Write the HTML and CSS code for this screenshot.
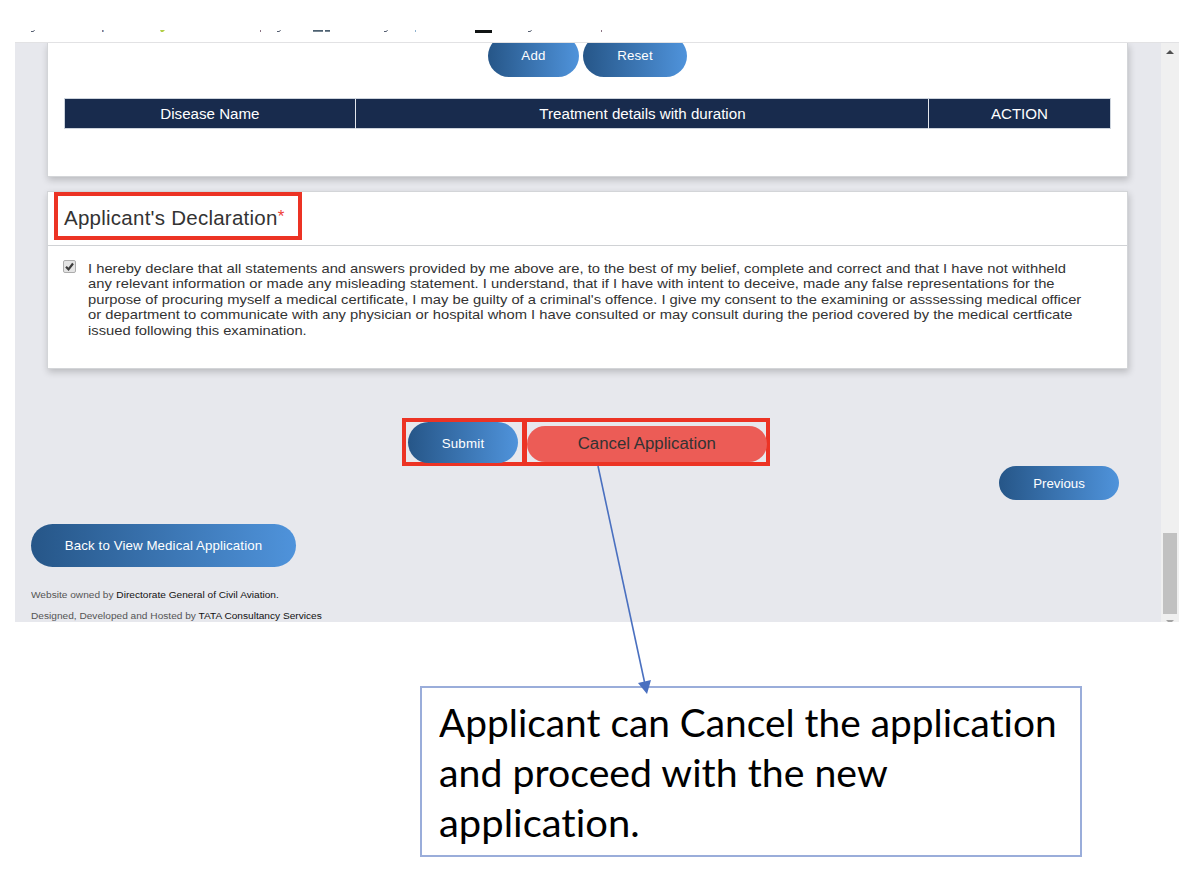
FILE: index.html
```html
<!DOCTYPE html>
<html lang="en">
<head>
<meta charset="utf-8">
<title>Medical Application</title>
<link rel="stylesheet" href="styles.css">
</head>
<body>
<main class="slide">
  <section class="browser">
    <svg class="bookmarks" width="1164" height="12" viewBox="15 30 1164 12">
      <g fill="none" stroke="#555e70" stroke-width="1">
        <path d="M31 31.500h2.500l1-1.500M277 31.500h2.500l1-1.500M384 31.500h2.500l1-1.500M528 31.500h2.500l1-1.500"/>
      </g>
      <path d="M102 30h1v2h-1zM260 30h1v2h-1zM601 30h1v2h-1z" fill="#8c7484"/>
      <path d="M103 30h1v2h-1zM415 30h1v2h-1z" fill="#8fb2cf"/>
      <path d="M160 30h5l-1 1-1 1h-2z" fill="#b2ce46"/>
      <path d="M313 30h10v1.700h-10zM325 30h5v1.700h-5z" fill="#4c6070"/>
      <path d="M475 30h17v3h-17z" fill="#101414"/>
    </svg>
    <div class="viewport">
      <div class="page">
        <section class="card history">
          <div class="history-actions">
            <button class="btn add">Add</button>
            <button class="btn reset">Reset</button>
          </div>
          <div class="table-head">
            <div><span>Disease Name</span></div><div><span>Treatment details with duration</span></div><div><span>ACTION</span></div>
          </div>
        </section>
        <section class="card declaration">
          <header class="declaration-head">
            <h2 class="marked">Applicant's Declaration<sup>*</sup></h2>
          </header>
          <div class="consent">
            <svg class="check" width="13" height="13" viewBox="0 0 13 13">
              <rect x=".5" y=".5" width="12" height="12" rx="1.500" fill="#e4e4e4" stroke="#adadad"/>
              <path d="M3 6.800l2.500 2.500L10 3.500" fill="none" stroke="#3c3c3c" stroke-width="2.200"/>
            </svg>
            <p class="consent-text">
              <span class="l1">I hereby declare that all statements and answers provided by me above are, to the best of my belief, complete and correct and that I have not withheld</span>
              <span class="l2">any relevant information or made any misleading statement. I understand, that if I have with intent to deceive, made any false representations for the</span>
              <span class="l3">purpose of procuring myself a medical certificate, I may be guilty of a criminal's offence. I give my consent to the examining or asssessing medical officer</span>
              <span class="l4">or department to communicate with any physician or hospital whom I have consulted or may consult during the period covered by the medical certficate</span>
              <span class="l5">issued following this examination.</span>
            </p>
          </div>
        </section>
        <div class="decision">
          <div class="frame frame-submit"><button class="btn submit">Submit</button></div>
          <div class="frame frame-cancel"><button class="btn cancel"><span>Cancel Application</span></button></div>
        </div>
        <div class="previous-row"><button class="btn previous">Previous</button></div>
        <button class="btn back">Back to View Medical Application</button>
        <footer class="footer">
          <p><span class="f1">Website owned by <b>Directorate General of Civil Aviation.</b></span></p>
          <p><span class="f2">Designed, Developed and Hosted by <b>TATA Consultancy Services</b></span></p>
        </footer>
      </div>
      <div class="scrollbar">
        <svg width="8" height="4" viewBox="0 0 8 4"><path d="M0 4L4 0l4 4z" fill="#505050"/></svg>
        <div class="thumb"></div>
        <svg class="down" width="8" height="2" viewBox="0 0 8 2"><path d="M0 0h8L6 2H2z" fill="#a3a3a3"/></svg>
      </div>
    </div>
  </section>
  <aside class="note">
    <span class="n1">Applicant can Cancel the application</span>
    <span class="n2">and proceed with the new</span>
    <span class="n3">application.</span>
  </aside>
  <svg class="arrow" width="70" height="235" viewBox="590 462 70 235">
    <path d="M598 466L644.500 682" stroke="#4a70c0" stroke-width="1.600" fill="none"/>
    <path d="M638 683L651 680L647 694z" fill="#4a70c0"/>
  </svg>
</main>
</body>
</html>
```
FILE: styles.css
```css
* { box-sizing: border-box; }
body { margin: 0; background: #fff; font-family: "Liberation Sans", Arial, sans-serif; color: #333; }
h2, p { margin: 0; }
.slide { position: relative; width: 1191px; height: 877px; overflow: hidden; padding: 30px 12px 0 15px; }
.browser { height: 592px; }
.bookmarks { display: block; }
.viewport { display: flex; height: 580px; border-top: 1px solid #e2e2e4; overflow: hidden; }
.page { width: 1146px; padding: 0 33px 0 32px; background: #e7e8ed; }
.card { background: #fff; border: 1px solid #d3d5d8; box-shadow: 1px 3px 7px rgba(0, 0, 0, .2); }
.history { height: 134px; border-top: 0; }
.history-actions { display: flex; gap: 4px; height: 34px; padding-left: 440px; }
.btn { display: flex; align-items: center; justify-content: center; flex: none; margin: 0; padding: 0; border: 0; border-radius: 30px; font: 13.3px "Liberation Sans", Arial, sans-serif; color: #fff; white-space: nowrap; background: linear-gradient(90deg, #265688, #4f93db); }
.add, .reset { width: 91px; height: 42px; margin-top: -8px; padding-bottom: 1px; letter-spacing: .2px; }
.reset { width: 104px; }
.table-head { display: grid; grid-template-columns: 290px 573px 182px; width: 1047px; height: 31px; margin: 21px 0 0 16px; border: 1px solid #ccd3dc; background: #182b4d; color: #fff; font-size: 14px; line-height: 30px; text-align: center; }
.table-head div + div { border-left: 1px solid #e2e6ec; }
.table-head span { display: inline-block; transform: scaleX(1.08); }
.declaration { height: 178px; margin-top: 14px; }
.declaration-head { height: 54px; padding-left: 6px; border-bottom: 1px solid #d0d2d5; }
.marked { width: 248px; height: 48px; border: 4px solid #ec3324; padding-left: 6px; font-size: 20.500px; font-weight: 400; line-height: 44px; white-space: nowrap; letter-spacing: .25px; }
.marked sup { color: #ee4037; font-size: 17px; line-height: 0; vertical-align: 3px; }
.consent { display: flex; padding: 14px 0 0 15px; }
.check { flex: none; }
.consent-text { padding: .5px 0 0 12px; font-size: 13.500px; line-height: 15.600px; }
.consent-text span { display: block; width: max-content; white-space: nowrap; transform: scaleX(1.0915); transform-origin: 0 0; }
.decision { display: flex; height: 48px; margin: 49px 0 0 355px; }
.frame { height: 48px; border: 4px solid #ec3324; }
.frame-submit { width: 124px; padding-left: 2px; }
.frame-cancel { width: 247px; margin-left: -3px; padding-top: 4px; }
.submit { width: 110px; height: 41px; padding-top: 2px; letter-spacing: .2px; }
.cancel { width: 240px; height: 36px; padding-bottom: 1px; background: #ec5c56; color: #333; font-size: 16px; }
.cancel span { transform: scaleX(1.05); }
.previous-row { display: flex; justify-content: flex-end; padding-right: 9px; }
.previous { width: 120px; height: 34px; }
.back { width: 265px; height: 43px; margin: 24px 0 0 -16px; letter-spacing: .1px; }
.footer { margin: 18px 0 0 -16px; font-size: 9.700px; line-height: 20.500px; white-space: nowrap; color: #555; }
.footer b { font-weight: 400; color: #111; }
.footer span { display: block; width: max-content; transform: scaleX(1.045); transform-origin: 0 0; }
.scrollbar { display: flex; flex-direction: column; align-items: center; width: 18px; padding-top: 7px; background: #f0f0f0; }
.scrollbar svg { flex: none; display: block; }
.thumb { width: 14px; height: 81px; margin-top: 479px; background: #c1c1c1; }
.scrollbar .down { margin-top: 6px; }
.note { width: 662px; height: 171px; margin: 64px 0 0 405px; padding: 9px 0 0 17px; border: 2px solid #9aadda; font: 38.500px/50px Lato, sans-serif; font-variant-ligatures: none; color: #000; }
.note span { display: block; width: max-content; white-space: nowrap; transform-origin: 0 0; }
.n1 { transform: scaleX(1.009); }
.n2 { transform: scaleX(1.02); }
.n3 { transform: scaleX(1.038); }
.arrow { position: absolute; left: 590px; top: 462px; }
```
